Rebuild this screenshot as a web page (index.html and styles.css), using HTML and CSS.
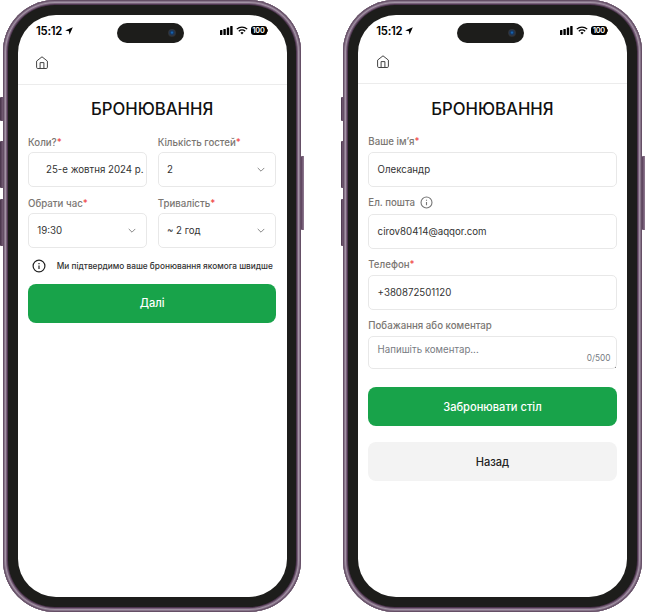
FILE: index.html
```html
<!DOCTYPE html>
<html lang="uk">
<head>
<meta charset="utf-8">
<title>Бронювання</title>
<link rel="stylesheet" href="styles.css">
</head>
<body>
<svg width="0" height="0" class="sprite" aria-hidden="true">
  <symbol id="arrow" viewBox="0 0 8 8"><path d="M7.800.300.200 3.500l3.700.700.600 3.600z"/></symbol>
  <symbol id="signal" viewBox="0 0 13 9"><rect x="0" y="4" width="2.400" height="5" rx=".6"/><rect x="3.400" y="2.900" width="2.400" height="6.100" rx=".6"/><rect x="6.800" y="1.400" width="2.400" height="7.600" rx=".6"/><rect x="10.200" y="0" width="2.400" height="9" rx=".6"/></symbol>
  <symbol id="wifi" viewBox="0 0 12 9"><path d="M.8 3.100a7.600 7.600 0 0 1 10.400 0M2.800 5.200a4.700 4.700 0 0 1 6.400 0" fill="none" stroke="#000" stroke-width="1.300"/><path d="M4.400 6.700a2.400 2.400 0 0 1 3.200 0L6 8.400z"/></symbol>
  <symbol id="home" viewBox="0 0 12 14"><path d="M.6 5.100 6 .8l5.400 4.300v6.200a1.200 1.200 0 0 1-1.200 1.200H1.800A1.200 1.200 0 0 1 .6 11.300zM4.100 12.500V6.600h3.800v5.900" fill="none" stroke="#444" stroke-width="1" stroke-linejoin="round"/></symbol>
  <symbol id="chevron" viewBox="0 0 8 6"><path d="m1 1.200 3 3 3-3" fill="none" stroke="#888" stroke-width="1" stroke-linecap="round" stroke-linejoin="round"/></symbol>
  <symbol id="info" viewBox="0 0 14 14"><circle cx="7" cy="7" r="5.900" fill="none" stroke="currentColor" stroke-width="1.200"/><path d="M7 6.500v3.400M7 4v1.200" stroke="currentColor" stroke-width="1.200"/></symbol>
</svg>
<main class="phones">
  <section class="phone">
    <i class="key mute"></i><i class="key up"></i><i class="key down"></i><i class="key power"></i>
    <div class="screen">
      <div class="status">
        <span class="time">15:12</span><svg class="arrow"><use href="#arrow"/></svg>
        <span class="island"><i class="lens"></i></span>
        <svg class="signal"><use href="#signal"/></svg><svg class="wifi"><use href="#wifi"/></svg><span class="battery">100</span>
      </div>
      <header class="bar"><svg class="home"><use href="#home"/></svg></header>
      <h1>БРОНЮВАННЯ</h1>
      <div class="pair">
        <div><label>Коли?<b>*</b></label><div class="field date">25-е жовтня 2024 р.</div></div>
        <div><label>Кількість гостей<b>*</b></label><div class="field">2<svg class="chevron"><use href="#chevron"/></svg></div></div>
        <div><label>Обрати час<b>*</b></label><div class="field">19:30<svg class="chevron"><use href="#chevron"/></svg></div></div>
        <div><label>Тривалість<b>*</b></label><div class="field">~ 2 год<svg class="chevron"><use href="#chevron"/></svg></div></div>
      </div>
      <div class="note"><svg class="info"><use href="#info"/></svg><span>Ми підтвердимо ваше бронювання якомога швидше</span></div>
      <button class="primary">Далі</button>
    </div>
  </section>
  <section class="phone details">
    <i class="key mute"></i><i class="key up"></i><i class="key down"></i><i class="key power"></i>
    <div class="screen">
      <div class="status">
        <span class="time">15:12</span><svg class="arrow"><use href="#arrow"/></svg>
        <span class="island"><i class="lens"></i></span>
        <svg class="signal"><use href="#signal"/></svg><svg class="wifi"><use href="#wifi"/></svg><span class="battery">100</span>
      </div>
      <header class="bar"><svg class="home"><use href="#home"/></svg></header>
      <h1>БРОНЮВАННЯ</h1>
      <div class="stack">
        <div><label>Ваше ім’я<b>*</b></label><div class="field">Олександр</div></div>
        <div class="mail"><label>Ел. пошта<svg class="hint"><use href="#info"/></svg></label><div class="field">cirov80414@aqqor.com</div></div>
        <div><label>Телефон<b>*</b></label><div class="field">+380872501120</div></div>
        <div><label>Побажання або коментар</label><div class="field comment"><span>Напишіть коментар...</span><small>0/500</small></div></div>
      </div>
      <button class="primary">Забронювати стіл</button>
      <button class="secondary">Назад</button>
    </div>
  </section>
</main>
</body>
</html>
```

FILE: styles.css
```css
* { box-sizing: border-box; }
body { margin: 0; background: #fff; font-family: Inter, sans-serif; color: #333; overflow: hidden; }
.sprite { position: absolute; }
svg { display: block; flex: none; }
.phones { display: flex; gap: 42px; padding-left: 3px; width: 645px; height: 612px; }
.phone {
  position: relative; flex: none; width: 298.300px; height: 612px;
  padding: 14.500px 14.500px 15px; border-radius: 52px; background: #1d1d1b;
  box-shadow: inset 0 0 0 1px #654f66, inset 0 0 0 2px #88758a, inset 0 0 0 3px #a393a5, inset 0 0 0 4px #79627a, inset 0 0 0 5px #4e3650;
}
.screen { display: flex; flex-direction: column; height: 582.500px; border-radius: 38px; background: #fff; overflow: hidden; }
.key { position: absolute; left: -3px; width: 3px; background: linear-gradient(90deg, #453047, #775f78); border-radius: 1px 0 0 1px; }
.details .key { left: -2px; width: 2px; }
.mute { top: 97px; height: 24px; }
.up { top: 141px; height: 47px; }
.down { top: 199px; height: 47px; }
.power, .details .power { top: 156px; height: 74px; left: auto; right: -3px; width: 3px; background: linear-gradient(90deg, #573d58, #927d93); }
.status { display: flex; align-items: center; flex: none; height: 32px; padding-left: 18.500px; }
.time { width: 27px; font-size: 11.300px; font-weight: 600; letter-spacing: -.25px; color: #000; white-space: nowrap; }
.arrow { width: 8px; height: 8px; margin-left: 2px; }
.island { width: 67px; height: 20px; margin: 5px 0 0 44px; border-radius: 10px; background: #1d1d1b; display: flex; align-items: center; justify-content: flex-end; padding-right: 8px; }
.lens { width: 8px; height: 8px; border-radius: 50%; background: radial-gradient(circle at 50% 45%, #1679cf 0, #143765 28%, #30343b 55%, #292929 75%); }
.signal { width: 13px; height: 9px; margin-left: 35.500px; }
.wifi { width: 12px; height: 9px; margin-left: 3px; }
.battery { position: relative; width: 16px; height: 9.500px; margin-left: 3px; border-radius: 3px; background: #000; color: #fff; font-size: 7.300px; font-weight: 600; line-height: 9.500px; text-align: center; letter-spacing: -.3px; }
.battery::after { content: ""; position: absolute; left: 16.500px; top: 3px; width: 1px; height: 3px; background: #333; border-radius: 0 1px 1px 0; }
.bar { flex: none; height: 38px; padding: 9px 0 0 18.800px; border-bottom: 1px solid #ececec; }
.home { width: 12px; height: 14px; }
h1 { flex: none; margin: 14.500px 0 16px; height: 20px; line-height: 20px; font-size: 16.700px; font-weight: 500; text-align: center; color: #111; }
.pair { display: grid; grid-template-columns: repeat(2, minmax(0, 1fr)); gap: 9px 11px; margin: 0 10.500px; }
label { display: flex; align-items: center; height: 14px; margin-bottom: 3px; font-size: 9.700px; color: #7a7672; font-weight: 500; white-space: nowrap; }
b { color: #ef4444; font-weight: 500; }
.field { display: flex; align-items: center; justify-content: space-between; height: 35px; padding: 0 10px 0 8.300px; border: 1px solid #e8e8e8; border-radius: 5px; font-size: 9.700px; white-space: nowrap; }
.date { padding: 0 0 0 17px; }
.chevron { width: 8px; height: 6px; }
.note { display: flex; align-items: center; height: 14px; margin: 11px 0 11px 14.300px; font-size: 8.280px; font-weight: 500; white-space: nowrap; }
.info { width: 14px; height: 14px; margin-right: 11px; color: #222; }
button { flex: none; height: 38.700px; margin: 0 10.500px; padding: 0; border: 0; border-radius: 8px; font: 500 11.100px/38.700px Inter, sans-serif; }
.primary { background: #18a34a; color: #fff; }
.secondary { margin-top: 16.600px; background: #f3f3f3; color: #222; }
.details button { padding-top: 1px; }
.details .bar { height: 37.500px; padding-top: 8.500px; }
.details h1 { margin-top: 15px; margin-bottom: 15.700px; }
.details .field { padding-top: 1.500px; }
.stack { display: flex; flex-direction: column; gap: 9px; margin: 0 10.500px 18px; }
.mail label { margin-bottom: 4px; }
.hint { width: 13px; height: 13px; margin-left: 5px; color: #777; }
.details .comment { position: relative; height: 33.300px; align-items: flex-start; padding: 7px 5px 0 8.300px; color: #777b82; }
.comment small { align-self: flex-end; padding-bottom: 5px; font-size: 8.300px; }
.comment::after { content: ""; position: absolute; right: 0; bottom: 0; width: 1px; height: 1px; background: #888; }
```
